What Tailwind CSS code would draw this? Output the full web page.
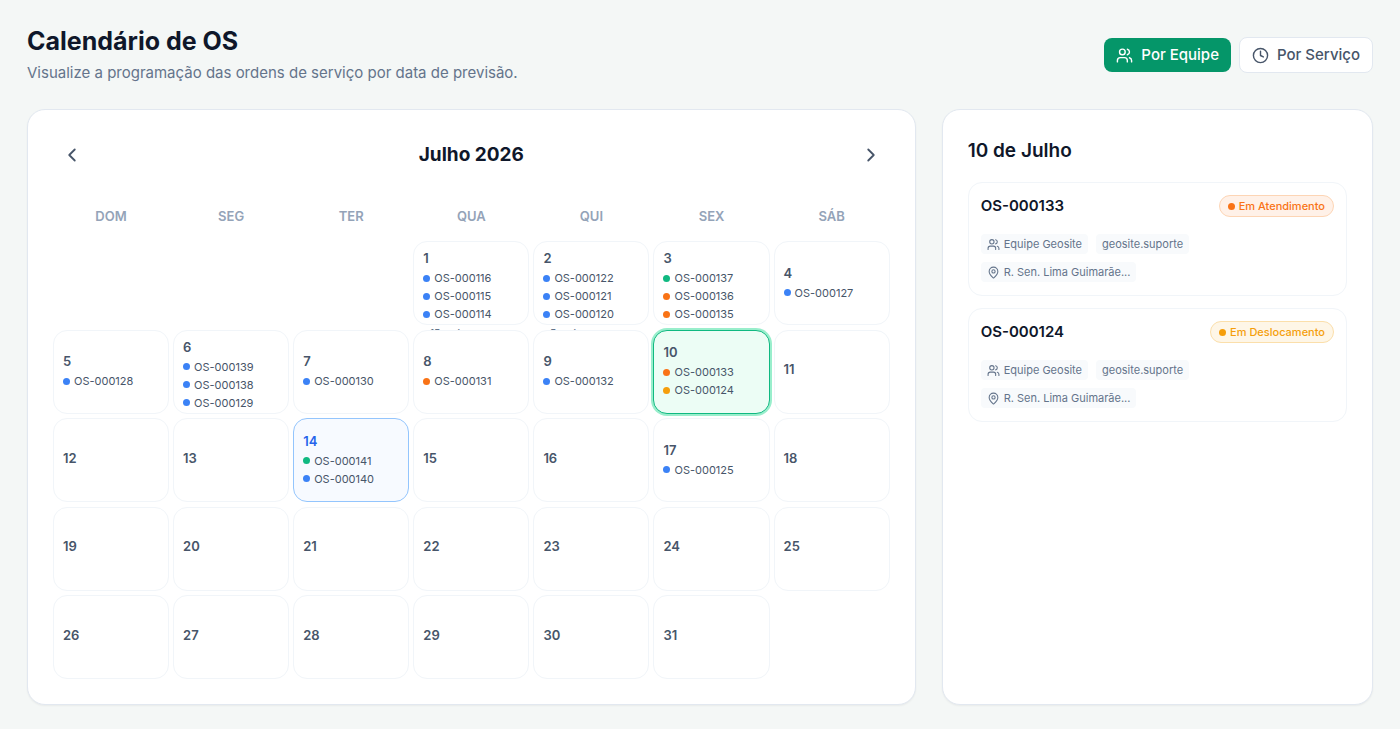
<!DOCTYPE html>
<html lang="pt-BR">
<head>
    <meta charset="UTF-8">
    <meta name="viewport" content="width=device-width, initial-scale=1.0">
    <title>Calendário de OS</title>
    <script src="https://cdn.jsdelivr.net/npm/@tailwindcss/browser@4"></script>
</head>
<body class="min-h-screen flex flex-col bg-[#f4f7f6] px-[27px] pt-[26px] pb-6 font-['Inter',sans-serif] text-[#0f172a]">

    <header class="flex items-center justify-between mb-[25px]">
        <div>
            <h1 class="text-[25px] leading-[30px] font-bold">Calendário de OS</h1>
            <p class="mt-[6px] text-[15px] leading-[22px] text-[#64748b]">Visualize a programação das ordens de serviço por data de previsão.</p>
        </div>
        <div class="flex items-center gap-2">
            <button class="flex items-center gap-2 h-[34px] px-3 rounded-lg bg-[#059669] text-white text-[15px] font-medium">
                <svg class="size-[17px]" viewBox="0 0 24 24" fill="none" stroke="currentColor" stroke-width="2" stroke-linecap="round" stroke-linejoin="round"><path d="M16 21v-2a4 4 0 0 0-4-4H6a4 4 0 0 0-4 4v2"/><circle cx="9" cy="7" r="4"/><path d="M22 21v-2a4 4 0 0 0-3-3.87"/><path d="M16 3.13a4 4 0 0 1 0 7.75"/></svg>
                Por Equipe
            </button>
            <button class="flex items-center gap-2 h-9 px-3 rounded-lg bg-white border border-[#e2e8f0] text-[#475569] text-[15px] font-medium">
                <svg class="size-[17px]" viewBox="0 0 24 24" fill="none" stroke="currentColor" stroke-width="2" stroke-linecap="round" stroke-linejoin="round"><circle cx="12" cy="12" r="10"/><path d="M12 6v6l4 2"/></svg>
                Por Serviço
            </button>
        </div>
    </header>

    <main class="flex-1 grid grid-cols-3 gap-[26px]">
        <section class="col-span-2 flex flex-col bg-white border border-[#e2e8f0] rounded-[18px] shadow-xs p-[25px]">
            <div class="flex items-center justify-between">
                <button aria-label="Mês anterior" class="px-2 py-[9px] text-[#475569]">
                    <svg class="size-[22px]" viewBox="0 0 24 24" fill="none" stroke="currentColor" stroke-width="2" stroke-linecap="round" stroke-linejoin="round"><path d="m15 18-6-6 6-6"/></svg>
                </button>
                <h2 class="text-[19px] leading-7 font-bold">Julho 2026</h2>
                <button aria-label="Próximo mês" class="px-2 py-[9px] text-[#475569]">
                    <svg class="size-[22px]" viewBox="0 0 24 24" fill="none" stroke="currentColor" stroke-width="2" stroke-linecap="round" stroke-linejoin="round"><path d="m9 18 6-6-6-6"/></svg>
                </button>
            </div>
            <div class="grid grid-cols-7 gap-1 mt-[31px] mb-[15px] text-center text-[13px] leading-5 font-semibold text-[#94a3b8]">
                <div>DOM</div>
                <div>SEG</div>
                <div>TER</div>
                <div>QUA</div>
                <div>QUI</div>
                <div>SEX</div>
                <div>SÁB</div>
            </div>
            <div id="days" class="flex-1 grid grid-cols-7 content-between gap-1"></div>
        </section>

        <section class="bg-white border border-[#e2e8f0] rounded-[18px] shadow-xs p-[25px]">
            <h2 class="mt-[2px] text-[19px] leading-7 font-semibold">10 de Julho</h2>
            <div id="orders" class="flex flex-col gap-3 mt-[17px]"></div>
        </section>
    </main>

    <script>
        const dotColors = {
            blue: "bg-[#3b82f6]",
            green: "bg-[#10b981]",
            orange: "bg-[#f97316]",
            amber: "bg-[#f59e0b]"
        };

        const events = {
            1: { list: [["116", "blue"], ["115", "blue"], ["114", "blue"]], more: 15 },
            2: { list: [["122", "blue"], ["121", "blue"], ["120", "blue"]], more: 5 },
            3: { list: [["137", "green"], ["136", "orange"], ["135", "orange"]] },
            4: { list: [["127", "blue"]] },
            5: { list: [["128", "blue"]] },
            6: { list: [["139", "blue"], ["138", "blue"], ["129", "blue"]] },
            7: { list: [["130", "blue"]] },
            8: { list: [["131", "orange"]] },
            9: { list: [["132", "blue"]] },
            10: { list: [["133", "orange"], ["124", "amber"]] },
            14: { list: [["141", "green"], ["140", "blue"]] },
            17: { list: [["125", "blue"]] }
        };

        const firstWeekday = 3;
        const selected = 10;
        const today = 14;
        const days = document.getElementById("days");

        for (let i = 0; i < firstWeekday; i++) {
            days.appendChild(document.createElement("div"));
        }

        for (let day = 1; day <= 31; day++) {
            let look = "bg-white border-[#f1f5f9] text-[#475569]";
            if (day === selected) look = "bg-[#ecfdf5] border-[#10b981] ring-2 ring-[#6ee7b7]/70 text-[#475569]";
            if (day === today) look = "bg-[#f7faff] border-[#93c5fd] text-[#2563eb]";

            let html = `<span class="block mb-[3px] text-[13px] leading-[18px] font-semibold">${day}</span>`;
            const ev = events[day];
            if (ev) {
                html += `<span class="flex flex-col gap-[2px] text-[11px] leading-4 text-[#475569]">`;
                for (const [num, color] of ev.list) {
                    html += `<span class="flex items-center gap-1"><span class="size-[7px] shrink-0 rounded-full ${dotColors[color]}"></span>OS-000${num}</span>`;
                }
                if (ev.more) html += `<span class="text-[10px] leading-[18px] font-medium text-[#64748b]">+${ev.more} mais</span>`;
                html += `</span>`;
            }

            const cell = document.createElement("button");
            cell.className = "h-[84px] px-[9px] pt-[7px] pb-[9px] border rounded-[14px] text-left " + look;
            cell.innerHTML = html;
            days.appendChild(cell);
        }

        const orders = [
            { id: "OS-000133", status: "Em Atendimento", badge: "bg-[#fff1e8] border-[#fdd5b5] text-[#f97316]", dot: "bg-[#f97316]" },
            { id: "OS-000124", status: "Em Deslocamento", badge: "bg-[#fef6e7] border-[#fbdfab] text-[#f59e0b]", dot: "bg-[#f59e0b]" }
        ];

        document.getElementById("orders").innerHTML = orders.map(o => `
            <article class="border border-[#f1f5f9] rounded-[14px] p-3 pb-[13px]">
                <div class="flex items-start justify-between">
                    <h3 class="text-[15px] leading-[22px] font-semibold">${o.id}</h3>
                    <span class="flex items-center gap-1 h-[22px] px-2 border rounded-full text-[11px] font-medium ${o.badge}">
                        <span class="size-[7px] rounded-full ${o.dot}"></span>${o.status}
                    </span>
                </div>
                <div class="flex flex-wrap gap-2 mt-[17px] text-[11px] leading-4 text-[#64748b]">
                    <span class="flex items-center gap-1 px-[6px] py-[2px] rounded bg-[#f8fafc]">
                        <svg class="size-[13px]" viewBox="0 0 24 24" fill="none" stroke="currentColor" stroke-width="2" stroke-linecap="round" stroke-linejoin="round"><path d="M16 21v-2a4 4 0 0 0-4-4H6a4 4 0 0 0-4 4v2"/><circle cx="9" cy="7" r="4"/><path d="M22 21v-2a4 4 0 0 0-3-3.87"/><path d="M16 3.13a4 4 0 0 1 0 7.75"/></svg>
                        Equipe Geosite
                    </span>
                    <span class="px-[6px] py-[2px] rounded bg-[#f8fafc]">geosite.suporte</span>
                </div>
                <div class="flex mt-2 text-[11px] leading-4 text-[#64748b]">
                    <span class="flex items-center gap-1 w-[155px] px-[6px] py-[2px] rounded bg-[#f8fafc] whitespace-nowrap">
                        <svg class="size-[13px] shrink-0" viewBox="0 0 24 24" fill="none" stroke="currentColor" stroke-width="2" stroke-linecap="round" stroke-linejoin="round"><path d="M20 10c0 5-5.54 10.19-7.4 11.8a1 1 0 0 1-1.2 0C9.54 20.19 4 15 4 10a8 8 0 0 1 16 0"/><circle cx="12" cy="10" r="3"/></svg>
                        R. Sen. Lima Guimarãe...
                    </span>
                </div>
            </article>`).join("");
    </script>

</body>
</html>
